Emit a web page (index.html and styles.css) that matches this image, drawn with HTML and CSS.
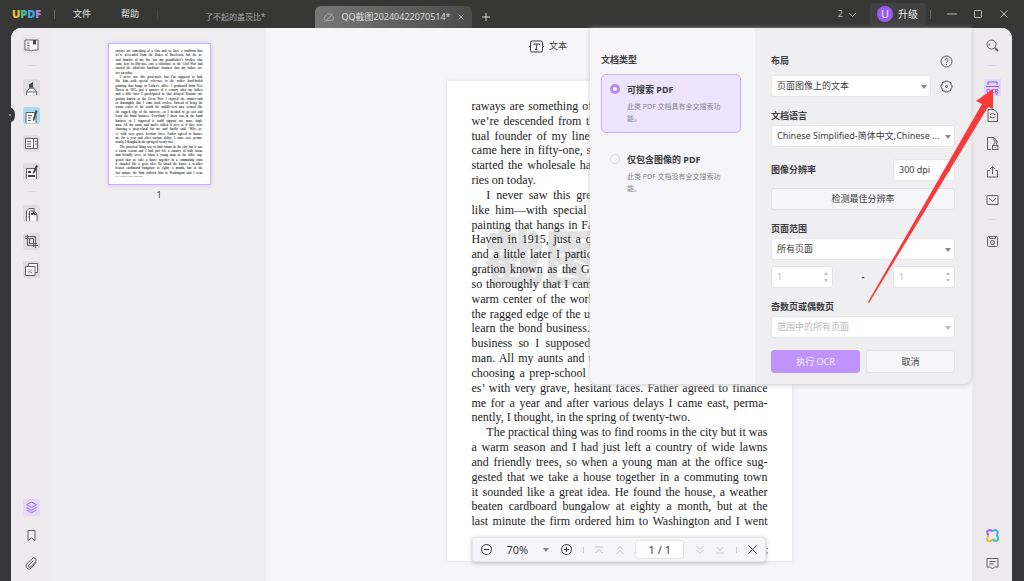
FILE: index.html
```
<!DOCTYPE html>
<html lang="zh-CN">
<head>
<meta charset="utf-8">
<title>UPDF</title>
<link rel="stylesheet" href="styles.css">
</head>
<body>
<header class="titlebar">
  <div class="logo"><span class="logo-u">U</span><span class="logo-p">P</span><span class="logo-d">D</span><span class="logo-f">F</span></div>
  <i class="bar-sep"></i>
  <nav class="menus"><button>文件</button><button>帮助</button></nav>
  <i class="bar-sep faint"></i>
  <div class="tabs">
    <button class="tab">了不起的盖茨比*</button>
    <div class="tab active">
      <svg width="12" height="12" viewBox="0 0 12 12"><path d="M3.5 9.5h5.2a2.3 2.3 0 0 0 .5-4.5A3.2 3.2 0 0 0 3.2 4.6 2.5 2.5 0 0 0 2.2 9M1.5 11l9-9"/></svg>
      <span>QQ截图20240422070514*</span>
      <button aria-label="关闭标签"><svg width="8" height="8" viewBox="0 0 8 8"><path d="M1.500 1.500l5 5M6.500 1.500l-5 5"/></svg></button>
    </div>
    <button class="add" aria-label="新标签"><svg width="10" height="10" viewBox="0 0 10 10"><path d="M5 1v8M1 5h8"/></svg></button>
  </div>
  <div class="window-tools">
    <button class="count">2 <svg width="9" height="9" viewBox="0 0 9 9"><path d="M1 3l3.500 3.500L8 3"/></svg></button>
    <button class="upgrade"><b>U</b>升级</button>
    <i class="bar-sep"></i>
    <button aria-label="最小化"><svg width="10" height="10" viewBox="0 0 10 10"><path d="M0 5h10"/></svg></button>
    <button aria-label="最大化"><svg width="10" height="10" viewBox="0 0 10 10"><rect x="1.500" y="1.500" width="7" height="7" rx="1"/></svg></button>
    <button aria-label="关闭"><svg width="10" height="10" viewBox="0 0 10 10"><path d="M1.500 1.500l7 7M8.500 1.500l-7 7"/></svg></button>
  </div>
</header>

<main class="app">
  <i class="knob"></i>
  <aside class="rail">
    <button class="tile soft" aria-label="阅读"><svg viewBox="0 0 17 17"><path class="w" d="M2 3h13v10H10l-1.500 1-1.500-1H2z"/><path d="M4 6h2.500M4 8.500h2.500M4 11h2.500"/><path class="k" d="M10 3h3v5l-1.500-1.300L10 8z"/></svg></button>
    <i class="rail-sep"></i>
    <button class="tile" aria-label="注释"><svg viewBox="0 0 17 17"><path class="w" d="M3.500 16v-3l3-4h4l3 4v3"/><path class="k" d="M6 8.500V5.500L10 3v5.500z"/><path d="M6 9h5M4 13h9"/></svg></button>
    <button class="tile blue" aria-label="编辑"><svg viewBox="0 0 17 17"><path class="w" d="M3 16V5.500h8.500l1.500 3V16"/><path d="M5 8.500h4M5 11h3M5 13.500h3"/><path class="k" d="M12.500 3l2 1-3 9-1.500 1v-2z"/></svg></button>
    <button class="tile" aria-label="页面"><svg viewBox="0 0 17 17"><path class="w" d="M2.500 3.500h8v10h-8zM10.500 3.500h4v10h-4z"/><path d="M4 6.500h4M4 9h4M4 11.500h4M12 6.500h2M12 9h2"/></svg></button>
    <button class="tile" aria-label="签名"><svg viewBox="0 0 17 17"><path class="w" d="M3.500 16V5.500h10V16"/><path class="k" d="M13 2l2 1-3.500 7-2 1 .5-2zM5 8h3v2H5zM5 12h7v2H5z"/></svg></button>
    <i class="rail-sep"></i>
    <button class="tile" aria-label="整理"><svg viewBox="0 0 17 17"><path class="w" d="M3.500 16V6L6 3.500h5V6l3 3v7"/><path d="M6.500 16V6H11M5 9h1M5 12h1"/><path class="k" d="M8 8h2v2H8zM10 6l4 4h-3l-1-1z"/></svg></button>
    <button class="tile" aria-label="裁剪"><svg viewBox="0 0 17 17"><path d="M2 3.500h10.500V15M4.500 2v10.500H15M2 5.500h8.500V14M6.500 5.500v5H14"/></svg></button>
    <button class="tile" aria-label="水印"><svg viewBox="0 0 17 17"><path class="w" d="M5.500 2.500h9v9h-9z"/><path class="w" d="M2.500 5.500h9.500v9H2.500z"/><path class="thin" d="M5 12l4.500-4M5.500 9l1-1M8 12l1.500-1.500M5 10l4 2"/></svg></button>
    <span class="grow"></span>
    <button class="tile violet" aria-label="图层"><svg viewBox="0 0 17 17"><path d="M8.500 3l5 2.700-5 2.800-5-2.800zM3.500 8.500l5 2.800 5-2.800M3.500 11l5 2.800 5-2.800"/></svg></button>
    <button aria-label="书签"><svg viewBox="0 0 17 17"><path d="M5 3.500h7v10L8.500 11 5 13.500z"/></svg></button>
    <button aria-label="附件"><svg viewBox="0 0 17 17"><path d="M13.500 7l-5.200 6a3 3 0 0 1-4.500-4L9 3.700a2.300 2.300 0 0 1 3.600 3L7.700 12a1.300 1.300 0 0 1-2-1.700L10 5.800"/></svg></button>
  </aside>

  <aside class="thumbs">
    <button class="thumb" aria-label="第 1 页">
      <span class="thumb-copy" data-copy></span>
      <span class="thumb-foot"><span>Free eBooks at <i>Planet eBook.com</i></span><span>3</span></span>
    </button>
    <span class="thumb-number">1</span>
  </aside>

  <section class="canvas">
    <div class="mode-bar"><button><svg width="15" height="13" viewBox="0 0 15 13"><rect x="1.500" y="1" width="12" height="11" rx="1.500"/><path d="M5 5V4h5.500v1M8 4L7 9.500M6 9.500h2.500M0 6.500h2M13 6.500h2"/></svg>文本</button></div>
    <article class="page">
      <span class="watermark">截图</span>
      <div class="copy" data-copy></div>
      <span class="tail">;</span>
    </article>

    <div class="pager">
      <button aria-label="缩小"><svg width="13" height="13" viewBox="0 0 13 13"><circle cx="6.500" cy="6.500" r="5"/><path d="M4 6.500h5"/></svg></button>
      <button class="zoom">70%<i class="caret"></i></button>
      <button aria-label="放大"><svg width="13" height="13" viewBox="0 0 13 13"><circle cx="6.500" cy="6.500" r="5"/><path d="M4 6.500h5M6.500 4v5"/></svg></button>
      <i class="pager-sep"></i>
      <button class="off" aria-label="首页"><svg width="10" height="10" viewBox="0 0 10 10"><path d="M1 2h8M1.500 8L5 4.500 8.500 8"/></svg></button>
      <button class="off" aria-label="上一页"><svg width="10" height="10" viewBox="0 0 10 10"><path d="M1.500 5L5 1.500 8.500 5M1.500 9L5 5.500 8.500 9"/></svg></button>
      <input value="1 / 1" aria-label="页码">
      <button class="off" aria-label="下一页"><svg width="10" height="10" viewBox="0 0 10 10"><path d="M1.500 1L5 4.500 8.500 1M1.500 5L5 8.500 8.500 5"/></svg></button>
      <button class="off" aria-label="末页"><svg width="10" height="10" viewBox="0 0 10 10"><path d="M1 8h8M1.500 2L5 5.500 8.500 2"/></svg></button>
      <i class="pager-sep"></i>
      <button aria-label="关闭"><svg width="11" height="11" viewBox="0 0 11 11"><path d="M1.500 1.500l8 8M9.500 1.500l-8 8"/></svg></button>
    </div>

    <form class="ocr">
      <div class="types">
        <h2>文档类型</h2>
        <label class="type chosen"><input type="radio" name="type" checked><span><strong>可搜索 PDF</strong><small>此类 PDF 文档具有全文搜索功能。</small></span></label>
        <label class="type"><input type="radio" name="type"><span><strong>仅包含图像的 PDF</strong><small>此类 PDF 文档没有全文搜索功能。</small></span></label>
      </div>
      <div class="options">
        <div class="line"><label for="layout">布局</label><button type="button" class="plain" aria-label="帮助"><svg width="13" height="13" viewBox="0 0 13 13"><circle cx="6.500" cy="6.500" r="5.500"/><path d="M4.900 5.300a1.600 1.600 0 1 1 2.400 1.400c-.6.3-.8.600-.8 1.200M6.500 9v1"/></svg></button></div>
        <div class="line after-label"><span class="select"><select id="layout"><option>页面图像上的文本</option></select></span><button type="button" class="plain gear" aria-label="设置"><svg width="13" height="13" viewBox="0 0 13 13"><path d="M5.300 1h2.400l.8 1.200 1.500-.2 1 1-.2 1.500L12 5.300v2.400l-1.200.8.200 1.500-1 1-1.500-.2L7.700 12H5.300l-.8-1.200L3 11l-1-1 .2-1.500L1 7.700V5.300l1.200-.8L2 3l1-1 1.500.2z"/><circle cx="6.500" cy="6.500" r="1"/></svg></button></div>
        <label class="group" for="language">文档语言</label>
        <span class="select"><select id="language"><option>Chinese Simplified-简体中文,Chinese ...</option></select></span>
        <div class="line dpi"><label for="dpi">图像分辨率</label><span class="select"><select id="dpi"><option>300 dpi</option></select></span></div>
        <button type="button" class="btn detect">检测最佳分辨率</button>
        <label class="group" for="range">页面范围</label>
        <span class="select"><select id="range"><option>所有页面</option></select></span>
        <div class="line range">
          <span class="spin"><input value="1" disabled aria-label="起始页"><svg width="6" height="12" viewBox="0 0 6 12"><path d="M1 4l2-3 2 3zM1 8l2 3 2-3z"/></svg></span>
          <b>-</b>
          <span class="spin"><input value="1" disabled aria-label="结束页"><svg width="6" height="12" viewBox="0 0 6 12"><path d="M1 4l2-3 2 3zM1 8l2 3 2-3z"/></svg></span>
        </div>
        <label class="group" for="parity">奇数页或偶数页</label>
        <span class="select dim"><select id="parity" disabled><option>范围中的所有页面</option></select></span>
        <div class="actions"><button type="button" class="btn primary">执行 OCR</button><button type="button" class="btn">取消</button></div>
      </div>
    </form>
  </section>

  <aside class="rail right">
    <button aria-label="搜索"><svg viewBox="0 0 17 17"><circle cx="7.500" cy="7.500" r="4.500"/><path d="M5.200 6.500v2"/><path class="thick" d="M11 11l3 3"/></svg></button>
    <i class="rail-sep"></i>
    <button class="ocr-button" aria-label="OCR"><svg viewBox="0 0 17 17"><path d="M4 6V3h9v3M2 7.500h13M3 15h2.500M11.500 15H14"/><text x="2" y="14">OCR</text></svg></button>
    <button aria-label="转换"><svg viewBox="0 0 17 17"><path d="M4 2.500h6l3.500 3.500v8.500H4z"/><path d="M6.200 8a2.600 2.600 0 0 1 4.600 0V6.500M11 9.500a2.600 2.600 0 0 1-4.600 0V11"/></svg></button>
    <button aria-label="保护"><svg viewBox="0 0 17 17"><path d="M7 14.500H3.500v-12H10L13 6v2M10 2.500V6h3"/><rect x="8.500" y="10.500" width="5.500" height="4"/><path d="M9.800 10.500V9.300a1.500 1.500 0 0 1 3 0v1.200M11.200 12v1"/></svg></button>
    <button aria-label="分享"><svg viewBox="0 0 17 17"><path d="M5.500 7.500h-2v6.500h10V7.500h-2M8.500 11V3.500M6 6l2.500-2.500L11 6"/></svg></button>
    <button aria-label="邮件"><svg viewBox="0 0 17 17"><rect x="3" y="4.500" width="11" height="9" rx="1"/><path d="M5 7.500l3.500 2.700L12 7.500"/></svg></button>
    <i class="rail-sep"></i>
    <button aria-label="保存"><svg viewBox="0 0 17 17"><rect x="3.500" y="3.500" width="10" height="10" rx="1"/><circle cx="8.500" cy="9.500" r="2"/><path d="M5.500 3.500v2h6v-2"/></svg></button>
    <span class="grow"></span>
    <button aria-label="AI 助手"><svg class="flower" viewBox="0 0 17 17"><path class="f1" d="M8.500 4.500C6 1.500 2 4 3.500 6.500L4.500 8.500"/><path class="f2" d="M8.500 4.500C11 1.500 15 4 13.500 6.500L12.500 8.500"/><path class="f3" d="M12.500 8.500C16 11 13.500 15 10.500 13.500L8.500 12.500"/><path class="f4" d="M8.500 12.500C6 16 1.500 13.500 3.500 10.500L4.500 8.500"/></svg></button>
    <button aria-label="评论"><svg viewBox="0 0 17 17"><path d="M3 3.500h11v8.500h-3.500l-2 2-2-2H3zM5.500 6.500h6M5.500 9h4"/></svg></button>
  </aside>
  <svg class="pointer" width="136" height="216" viewBox="0 0 136 216"><path d="M1 215L115 17L109 14L126 2L126 22L121 20L2 216z"/></svg>
</main>
<script src="page.js"></script>
</body>
</html>
```
FILE: page.js
```
const lines = [
  "raways are something of a clan and we have a tradition that",
  "we’re descended from the Dukes of Buccleuch, but the ac-",
  "tual founder of my line was my grandfather’s brother who",
  "came here in fifty-one, sent a substitute to the Civil War and",
  "started the wholesale hardware business that my father car-",
  "ries on today.|end",
  "I never saw this great-uncle but I’m supposed to look|start",
  "like him—with special reference to the rather hard-boiled",
  "painting that hangs in Father’s office. I graduated from New",
  "Haven in 1915, just a quarter of a century after my father,",
  "and a little later I participated in that delayed Teutonic mi-",
  "gration known as the Great War. I enjoyed the counter-raid",
  "so thoroughly that I came back restless. Instead of being the",
  "warm center of the world the middle-west now seemed like",
  "the ragged edge of the universe—so I decided to go east and",
  "learn the bond business. Everybody I knew was in the bond",
  "business so I supposed it could support one more single",
  "man. All my aunts and uncles talked it over as if they were",
  "choosing a prep-school for me and finally said, ‘Why—ye-",
  "es’ with very grave, hesitant faces. Father agreed to finance",
  "me for a year and after various delays I came east, perma-",
  "nently, I thought, in the spring of twenty-two.|end",
  "The practical thing was to find rooms in the city but it was|start",
  "a warm season and I had just left a country of wide lawns",
  "and friendly trees, so when a young man at the office sug-",
  "gested that we take a house together in a commuting town",
  "it sounded like a great idea. He found the house, a weather",
  "beaten cardboard bungalow at eighty a month, but at the",
  "last minute the firm ordered him to Washington and I went"
];
document.querySelectorAll("[data-copy]").forEach((box) => {
  for (const line of lines) {
    const [text, kind] = line.split("|");
    const row = document.createElement("span");
    row.className = "row " + (kind || "");
    row.textContent = text;
    box.append(row);
  }
});
```
FILE: styles.css
```
* { box-sizing: border-box; }
body {
  margin: 0;
  min-height: 100vh;
  display: flex;
  flex-direction: column;
  overflow: hidden;
  background: #373638;
  color: #3c3c3e;
  font: 9px/14px "Noto Sans", "Noto Sans CJK SC", sans-serif;
}
button, input, select { font: inherit; color: inherit; }
button { border: 0; padding: 0; background: none; display: flex; align-items: center; justify-content: center; }
svg { display: block; fill: none; stroke: currentColor; stroke-width: 1; flex: none; }
h2 { margin: 0; font-size: 9px; line-height: 14px; }
i { font-style: normal; }

.titlebar { height: 28px; display: flex; align-items: center; background: #363735; color: #d6d6d6; padding: 0 15px 0 12px; }
.logo { width: 42px; font: 800 11px/14px "Open Sans", sans-serif; }
.logo-u { color: #e6c33c; }
.logo-p { color: #48c48c; }
.logo-d { color: #45a5e6; }
.logo-f { color: #b083ee; }
.bar-sep { width: 1px; height: 9px; background: #666; }
.bar-sep.faint { background: #444; }
.menus { display: flex; gap: 30px; padding: 0 18px; color: #e8e8e8; }
.tabs { display: flex; align-self: flex-end; align-items: center; }
.tab { height: 22px; font-size: 8px; color: #aaa; padding: 0 50px 0 47px; }
.tab.active { display: flex; align-items: center; gap: 6px; width: 157px; padding: 0 8px; font-size: 9px; color: #ddd; white-space: nowrap; border-radius: 6px 6px 0 0; background: linear-gradient(90deg, #777, #4a4b4a); }
.tab.active svg { color: #aaa; }
.add { margin-left: 9px; }
.window-tools { margin-left: auto; display: flex; align-items: center; gap: 16px; color: #bbb; }
.count { gap: 5px; }
.upgrade { height: 22px; padding: 0 8px 0 7px; gap: 5px; margin: 0 -8px 0 -3px; background: #414141; border-radius: 4px; font-size: 10px; color: #eee; }
.upgrade { margin-right: -12px; }
.upgrade b { width: 16px; height: 16px; border-radius: 50%; background: #9a5cf0; font: 11px/16px "Noto Sans", sans-serif; }

.app { flex: 1; position: relative; display: grid; grid-template-columns: 41px 214px 1fr 40px; margin: 0 12px 0 11px; background: #efeef0; border-radius: 10px 10px 0 0; }
.rail { display: flex; flex-direction: column; align-items: center; gap: 11px; padding: 9px 0; background: #edebee; border-radius: 10px 0 0; color: #606060; }
.rail.right { border-radius: 0 10px 0 0; }
.rail button, .rail svg { width: 17px; height: 17px; }
.rail-sep { width: 8px; height: 3px; border-top: 1px solid #dcdadd; }
.rail .tile { background: #dddcde; border-radius: 3px; }
.rail .soft { background: #e5e4e6; }
.rail .blue { background: #a9dbf6; }
.rail .violet { background: #e6d9fc; color: #9b6cf0; }
.rail .w { fill: #fff; }
.rail .k { fill: #444; stroke: none; }
.rail .thick { stroke-width: 2; }
.rail .thin { opacity: .6; }
.grow { flex: 1; }
.knob { position: absolute; left: -4px; top: 80px; width: 8px; height: 14px; border-radius: 50%; background: #373638; }
.knob::after { content: ""; position: absolute; left: 2px; top: 6px; width: 2px; height: 2px; border-radius: 50%; background: #b9a4e8; }
.ocr-button { color: #9558f0; background: #e3d4fc; }
.ocr-button text { font: bold 6px "Noto Sans", sans-serif; fill: currentColor; stroke: none; }
.f1 { stroke: #9b5ff0; }
.f2 { stroke: #48a8ee; }
.f3 { stroke: #3cc5a2; }
.f4 { stroke: #e8b545; }
.flower { stroke-width: 2; }

.thumbs { display: flex; flex-direction: column; align-items: center; padding-top: 15px; }
.thumb { width: 103px; height: 142px; padding: 7px; flex-direction: column; justify-content: space-between; align-items: stretch; background: #fff; border: 1px solid #c9b3f4; box-shadow: 0 0 4px #d3c2f5; overflow: hidden; }
.thumb-copy { display: grid; grid-template: repeat(29, 1fr) / minmax(0, 1fr); height: 126px; font: bold 3px/4px "Liberation Serif", serif; color: #444; margin-top: -2px; }
.thumb-foot { display: flex; justify-content: space-between; font: 2px/2px "Liberation Serif", serif; }
.thumb-number { margin-top: 3px; }

.canvas { position: relative; min-width: 0; background: #f6f5f8; }
.mode-bar { height: 53px; padding: 11px 0 0 263px; }
.mode-bar button { gap: 5px; }
.page { position: relative; width: 345px; height: 480px; margin: 0 auto; padding: 18px 24px 0 25px; background: #fff; box-shadow: 0 0 4px #dddce0; }
.copy { position: relative; display: grid; grid-template: repeat(29, 1fr) / minmax(0, 1fr); height: 430px; font: 12px/14px "Liberation Serif", serif; color: #222; }
.row { white-space: nowrap; text-align: justify; text-align-last: justify; }
.row.end { text-align-last: left; }
.row.start { padding-left: 5%; }
.watermark { position: absolute; left: 38px; top: 142px; font: 900 60px/64px "Noto Sans CJK SC", sans-serif; color: #e0e0e0; }
.tail { position: absolute; right: 23px; bottom: 4px; }

.pager { position: absolute; left: 50%; bottom: 19px; transform: translateX(-50%); display: flex; align-items: center; justify-content: space-between; width: 294px; height: 25px; padding: 0 7px; background: #f6f5f7; border: 1px solid #e6e5e8; border-radius: 3px; box-shadow: 0 1px 4px #bbb; font-size: 11px; }
.pager input { width: 49px; height: 19px; padding: 0; text-align: center; background: #fff; border: 1px solid #e3e2e4; border-radius: 3px; }
.pager .off { color: #c4c3c6; }
.pager-sep { width: 1px; height: 6px; background: #d0cfd2; }
.zoom { gap: 15px; padding-left: 3px; }
.caret, .select::after { content: ""; border: 3px solid transparent; border-top: 4px solid #88878a; border-bottom: 0; }

.ocr { position: absolute; top: 0; right: 1px; width: 381px; display: grid; grid-template-columns: 165px 1fr; background: #f6f5f8; border-radius: 0 0 8px 8px; box-shadow: 0 1px 5px #c9c8cc; }
.types { padding: 25px 14px 0 11px; }
.type { display: flex; gap: 7px; height: 59px; padding: 9px 8px; border: 1px solid transparent; border-radius: 5px; }
.type.chosen { margin: 7px 0 11px; background: #efe4ff; border-color: #ccb0fb; }
.type input { appearance: none; flex: none; width: 10px; height: 10px; margin: 0; border-radius: 50%; border: 1px solid #dddce0; background: #f8f7fa; }
.type input:checked { border: 3px solid #b58bfb; background: #fff; }
.type strong { display: block; line-height: 12px; }
.type small { display: block; width: 98px; margin-top: 5px; font-size: 7px; line-height: 12px; color: #88868c; }
.options { display: flex; flex-direction: column; padding: 26px 16px 11px; background: #efeef1; border-radius: 0 0 8px 0; }
.options label { font-weight: bold; height: 14px; }
.line { display: flex; align-items: center; justify-content: space-between; }
.line .plain { width: 17px; color: #555; }
.after-label { margin-top: 7px; gap: 7px; }
.after-label .select { flex: 1; }
.group { margin: 12px 0 2px; }
.select { position: relative; height: 22px; background: #fff; border: 1px solid #e6e5e8; border-radius: 3px; }
.select select { width: 100%; height: 20px; padding: 0 10px 0 5px; border: 0; background: none; appearance: none; white-space: nowrap; }
.select::after { position: absolute; right: 3px; top: 9px; pointer-events: none; }
.dim, .dim select { color: #bab9bc; opacity: 1; }
.dim::after { opacity: .6; }
.dpi { margin-top: 12px; }
.dpi .select { width: 62px; }
.btn { height: 22px; background: #f6f5f7; border: 1px solid #e3e2e5; border-radius: 3px; }
.detect { margin-top: 7px; }
.range { margin-top: 6px; }
.spin { width: 62px; height: 22px; display: flex; align-items: center; padding: 0 3px 0 5px; background: #fff; border: 1px solid #e3e2e5; border-radius: 3px; color: #bcbbbe; }
.spin input { min-width: 0; flex: 1; width: 0; padding: 0; border: 0; background: none; }
.spin path { fill: currentColor; stroke: none; }
.actions { display: grid; grid-template-columns: 1fr 1fr; gap: 6px; margin-top: 12px; }
.actions .btn { height: 23px; }
.actions .primary { background: #c094ff; border-color: #c094ff; color: #f6edff; }
.pointer { position: absolute; right: 9px; top: 59px; pointer-events: none; }
.pointer path { fill: #f73b3b; stroke: none; }
```
